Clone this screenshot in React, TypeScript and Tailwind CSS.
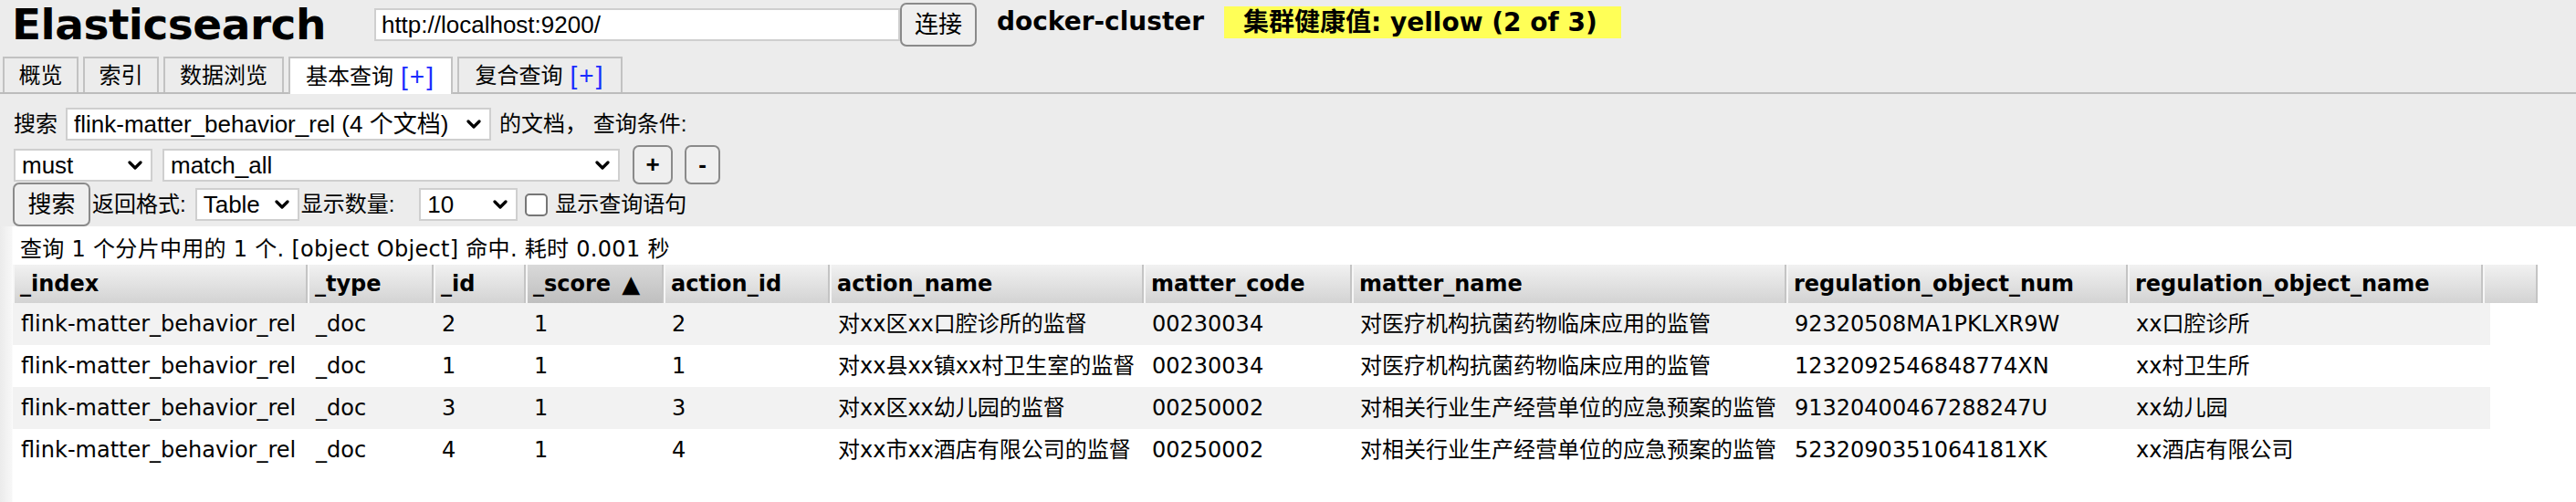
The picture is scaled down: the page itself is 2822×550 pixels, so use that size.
import React from 'react';

const dv = "font-['DejaVu_Sans','Noto_Sans_CJK_SC',sans-serif]";
const ar = "font-['Liberation_Sans','Noto_Sans_CJK_SC',sans-serif]";

const Chevron: React.FC = () => (
  <svg width="16" height="12" viewBox="0 0 16 12" className="shrink-0">
    <path d="M2 3 L8 9 L14 3" fill="none" stroke="#000" strokeWidth="3.2" strokeLinecap="round" strokeLinejoin="round" />
  </svg>
);

const Select: React.FC<{ w: string; children: React.ReactNode }> = ({ w, children }) => (
  <div className={`${w} ${ar} flex h-[36px] items-center justify-between border-2 border-[#cfcfcf] bg-white pl-[7px] pr-[9px] text-[26px] leading-none text-black`}>
    <span className="whitespace-nowrap">{children}</span>
    <Chevron />
  </div>
);

const Button: React.FC<{ w: string; h: string; children: React.ReactNode; cls?: string }> = ({ w, h, children, cls = '' }) => (
  <div className={`${w} ${h} ${cls} flex items-center justify-center rounded-[7px] border-2 border-[#8a8a8a] bg-[#efefef] text-black`}>
    {children}
  </div>
);

const tabs = [
  { label: '概览', w: 'w-[83px]' },
  { label: '索引', w: 'w-[83px]' },
  { label: '数据浏览', w: 'w-[132px]' },
  { label: '基本查询', w: 'w-[180px]', plus: true, active: true },
  { label: '复合查询', w: 'w-[181px]', plus: true },
];

const cols = [
  { key: '_index', w: 'w-[323px]' },
  { key: '_type', w: 'w-[138px]' },
  { key: '_id', w: 'w-[101px]' },
  { key: '_score', w: 'w-[151px]', sorted: true },
  { key: 'action_id', w: 'w-[182px]' },
  { key: 'action_name', w: 'w-[344px]' },
  { key: 'matter_code', w: 'w-[228px]' },
  { key: 'matter_name', w: 'w-[476px]' },
  { key: 'regulation_object_num', w: 'w-[374px]' },
  { key: 'regulation_object_name', w: 'w-[389px]' },
];

const bodyWidths = ['w-[323px]', 'w-[138px]', 'w-[101px]', 'w-[151px]', 'w-[182px]', 'w-[344px]', 'w-[228px]', 'w-[476px]', 'w-[374px]', 'w-[397px]'];

const rows = [
  ['flink-matter_behavior_rel', '_doc', '2', '1', '2', '对xx区xx口腔诊所的监督', '00230034', '对医疗机构抗菌药物临床应用的监管', '92320508MA1PKLXR9W', 'xx口腔诊所'],
  ['flink-matter_behavior_rel', '_doc', '1', '1', '1', '对xx县xx镇xx村卫生室的监督', '00230034', '对医疗机构抗菌药物临床应用的监管', '1232092546848774XN', 'xx村卫生所'],
  ['flink-matter_behavior_rel', '_doc', '3', '1', '3', '对xx区xx幼儿园的监督', '00250002', '对相关行业生产经营单位的应急预案的监管', '91320400467288247U', 'xx幼儿园'],
  ['flink-matter_behavior_rel', '_doc', '4', '1', '4', '对xx市xx酒店有限公司的监督', '00250002', '对相关行业生产经营单位的应急预案的监管', '5232090351064181XK', 'xx酒店有限公司'],
];

const headCell =
  'flex h-[42px] shrink-0 items-center pl-[8px] text-[24px] font-bold shadow-[inset_-2px_0_0_#c4c4c4,inset_2px_0_0_#f6f6f6]';

export default function App() {
  return (
    <div className="w-[2822px] h-[550px] overflow-hidden bg-[#ececec] text-black">
      {/* header */}
      <div className="flex h-[55px] items-start">
        <div className={`${dv} ml-[13px] mt-[-1px] text-[47px] font-bold leading-[55px] tracking-[-0.5px]`}>Elasticsearch</div>
        <div className={`${ar} ml-[53px] mt-[9px] flex h-[36px] w-[576px] items-center border-2 border-[#cfcfcf] bg-white pl-[6px] text-[26px]`}>
          http://localhost:9200/
        </div>
        <Button w="w-[84px]" h="h-[48px]" cls={`${ar} mt-[3px] text-[26px]`}>连接</Button>
        <div className={`${dv} ml-[22px] mt-[6px] text-[28px] font-bold leading-[36px]`}>docker-cluster</div>
        <div className={`${dv} ml-[22px] mt-[7px] flex h-[35px] w-[435px] items-center bg-[#ffff57] pl-[21px] text-[28px] font-bold`}>
          集群健康值: yellow (2 of 3)
        </div>
      </div>

      {/* tabs */}
      <div className="mt-[7px] flex h-[41px] items-end gap-[5px] border-b-2 border-[#bcbcbc] pl-[3px]">
        {tabs.map((t) => (
          <div
            key={t.label}
            className={`${t.w} ${ar} flex items-center justify-center border-2 border-b-0 border-[#c2c2c2] text-[24px] ${
              t.active ? 'mb-[-2px] h-[41px] bg-white' : 'h-[39px] bg-[#ececec]'
            }`}
          >
            {t.label}
            {t.plus && <span className="ml-[8px] text-[28px] tracking-[2px] text-[#1a2cff]">[+]</span>}
          </div>
        ))}
      </div>

      {/* query form */}
      <div className={`${ar} ml-[15px] mt-[15px] flex flex-col text-[24px]`}>
        <div className="flex h-[36px] items-center">
          <span>搜索</span>
          <div className="ml-[9px]">
            <Select w="w-[466px]">flink-matter_behavior_rel (4 个文档)</Select>
          </div>
          <span className="ml-[9px] whitespace-pre">的文档， 查询条件:</span>
        </div>
        <div className="mt-[5px] flex h-[43px] items-center">
          <Select w="w-[152px]">must</Select>
          <div className="ml-[11px]">
            <Select w="w-[501px]">match_all</Select>
          </div>
          <Button w="w-[44px]" h="h-[43px]" cls="ml-[14px] text-[26px] font-bold">+</Button>
          <Button w="w-[39px]" h="h-[43px]" cls="ml-[13px] text-[26px] font-bold">-</Button>
        </div>
        <div className="mt-[-2px] flex h-[48px] items-center">
          <Button w="w-[85px]" h="h-[48px]" cls="ml-[-1px] text-[26px]">搜索</Button>
          <span className="ml-[2px]">返回格式:</span>
          <div className="ml-[10px]">
            <Select w="w-[114px]">Table</Select>
          </div>
          <span className="ml-[2px]">显示数量:</span>
          <div className="ml-[27px]">
            <Select w="w-[108px]">10</Select>
          </div>
          <div className="ml-[8px] h-[25px] w-[25px] rounded-[5px] border-2 border-[#767676] bg-white" />
          <span className="ml-[8px]">显示查询语句</span>
        </div>
      </div>

      {/* results */}
      <div className="h-[303px] bg-[linear-gradient(to_right,#ebebeb,#f7f7f7_13px,#fff_14px)]">
        <div className={`${dv} h-[42px] pl-[22px] pt-[13px] text-[24px] leading-[24px] tracking-[0.3px]`}>
          查询 1 个分片中用的 1 个. [object Object] 命中. 耗时 0.001 秒
        </div>
        <div className={`${dv} ml-[14px] flex flex-col`}>
          <div className="flex">
            {cols.map((c) => (
              <div
                key={c.key}
                className={`${c.w} ${headCell} ${
                  c.sorted
                    ? 'bg-[linear-gradient(to_bottom,#d9d9d9,#bfbfbf)]'
                    : 'bg-[linear-gradient(to_bottom,#f1f1f1,#d3d3d3)]'
                }`}
              >
                {c.key}
                {c.sorted && <span className="ml-[12px] text-[26px]">▲</span>}
              </div>
            ))}
            <div className={`w-[60px] ${headCell} bg-[linear-gradient(to_bottom,#f1f1f1,#d3d3d3)]`} />
          </div>
          {rows.map((r, i) => (
            <div key={i} className={`flex h-[46px] w-[2714px] items-center ${i % 2 === 0 ? 'bg-[#f2f2f2]' : 'bg-white'}`}>
              {r.map((v, j) => (
                <div key={j} className={`${bodyWidths[j]} shrink-0 whitespace-nowrap pl-[9px] text-[24px] leading-none`}>
                  {v}
                </div>
              ))}
            </div>
          ))}
        </div>
      </div>
    </div>
  );
}
